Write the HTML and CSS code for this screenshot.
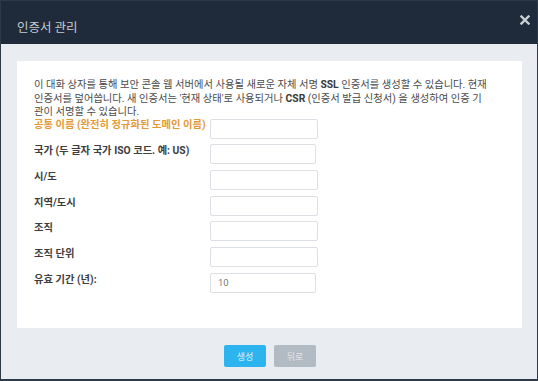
FILE: index.html
```html
<!DOCTYPE html>
<html lang="ko">
<head>
  <meta charset="UTF-8">
  <meta name="viewport" content="width=device-width, initial-scale=1.0">
  <title>인증서 관리</title>
  <link rel="stylesheet" href="styles.css">
</head>
<body>
  <div class="dialog">
    <div class="dialogHeader">
      <h1>인증서 관리</h1>
      <button class="closeButton" aria-label="닫기">
        <svg width="10" height="10" viewBox="0 0 10 10">
          <path d="M1.5 1.5 L8.5 8.5 M8.5 1.5 L1.5 8.5" stroke="#c9ced4" stroke-width="2.4" stroke-linecap="square"/>
        </svg>
      </button>
    </div>
    <div class="dialogBody">
      <div class="panel">
        <p class="intro">이 대화 상자를 통해 보안 콘솔 웹 서버에서 사용될 새로운 자체 서명 <b>SSL</b> 인증서를 생성할 수 있습니다. 현재 인증서를 덮어씁니다. 새 인증서는 '현재 상태'로 사용되거나 <b>CSR</b> (인증서 발급 신청서) 을 생성하여 인증 기관이 서명할 수 있습니다.</p>
        <div class="form">
          <div class="formRow">
            <label class="required">공통 이름 (완전히 정규화된 도메인 이름)</label>
            <input type="text" class="field">
          </div>
          <div class="formRow">
            <label>국가 (두 글자 국가 ISO 코드. 예: US)</label>
            <input type="text" class="field narrow">
          </div>
          <div class="formRow">
            <label>시/도</label>
            <input type="text" class="field">
          </div>
          <div class="formRow">
            <label>지역/도시</label>
            <input type="text" class="field">
          </div>
          <div class="formRow">
            <label>조직</label>
            <input type="text" class="field">
          </div>
          <div class="formRow">
            <label>조직 단위</label>
            <input type="text" class="field">
          </div>
          <div class="formRow">
            <label>유효 기간 (년):</label>
            <input type="text" class="field narrow" value="10">
          </div>
        </div>
      </div>
      <div class="actions">
        <button class="btn btnPrimary">생성</button>
        <button class="btn btnSecondary">뒤로</button>
      </div>
    </div>
  </div>
</body>
</html>
```

FILE: styles.css
```css
* {
  margin: 0;
  padding: 0;
  box-sizing: border-box;
}
body {
  font-family: Roboto, "Noto Sans CJK KR", sans-serif;
  font-size: 10.3px;
  color: #4a4a4a;
  background-color: #2e3947;
}
.dialog {
  width: 538px;
  height: 381px;
  border: 1px solid #2e3947;
  border-bottom-width: 2px;
  display: flex;
  flex-direction: column;
}
.dialogHeader {
  height: 43px;
  background-color: #1f2a3a;
  display: flex;
  align-items: center;
  justify-content: space-between;
  padding: 0 4px 0 16px;
}
.dialogHeader h1 {
  font-size: 12.5px;
  font-weight: normal;
  color: #c5cad1;
  margin-top: 8px;
}
.closeButton {
  border: none;
  background: none;
  width: 16px;
  height: 16px;
  margin-top: -5px;
  display: flex;
  align-items: center;
  justify-content: center;
  cursor: pointer;
}
.dialogBody {
  flex: 1;
  background-color: #e9edf2;
  padding: 17px 15px 0 16px;
  display: flex;
  flex-direction: column;
}
.panel {
  background-color: #fff;
  padding: 17px 33px 35px 17px;
  height: 267px;
}
.intro {
  line-height: 13.5px;
}
.intro b {
  font-weight: bold;
  color: #3a3a3a;
}
.form {
  display: flex;
  flex-direction: column;
  gap: 5.7px;
}
.formRow {
  display: flex;
  align-items: flex-start;
}
.formRow label {
  width: 176px;
  flex-shrink: 0;
  white-space: nowrap;
  line-height: 13px;
  font-weight: bold;
  color: #3d3d3d;
}
.formRow label.required {
  color: #e39a38;
  margin-top: -1px;
}
.field {
  width: 108px;
  height: 20px;
  border: 1px solid #dcdfe3;
  border-radius: 2px;
  background-color: #fff;
  padding: 0 7px;
  font-family: inherit;
  font-size: 9.5px;
  color: #7a7a7a;
}
.field.narrow {
  width: 106px;
}
.actions {
  display: flex;
  justify-content: center;
  gap: 8px;
  margin-top: 17px;
  padding-left: 1px;
}
.btn {
  width: 42px;
  height: 22px;
  border: none;
  border-radius: 2px;
  font-family: inherit;
  font-size: 9px;
  cursor: pointer;
}
.btnPrimary {
  background-color: #2cb4ee;
  color: #dff3fc;
}
.btnSecondary {
  background-color: #b2bbc3;
  color: #e3e7ea;
}
```
